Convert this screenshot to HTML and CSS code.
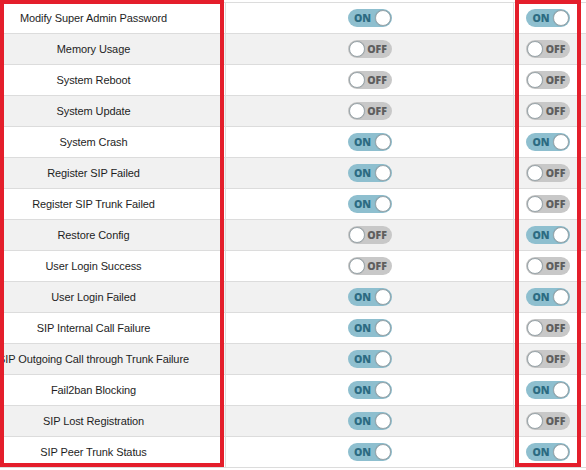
FILE: index.html
```
<!DOCTYPE html>
<html>
<head>
<meta charset="utf-8">
<link rel="stylesheet" href="styles.css">
</head>
<body>
<div class="page">
  <div class="table">
    <div class="row"><div class="name">Modify Super Admin Password</div><div class="c2"><span class="tg on"><b>ON</b><i></i></span></div><div class="c3"><span class="tg on"><b>ON</b><i></i></span></div></div>
    <div class="row alt"><div class="name">Memory Usage</div><div class="c2"><span class="tg off"><i></i><b>OFF</b></span></div><div class="c3"><span class="tg off"><i></i><b>OFF</b></span></div></div>
    <div class="row"><div class="name">System Reboot</div><div class="c2"><span class="tg off"><i></i><b>OFF</b></span></div><div class="c3"><span class="tg off"><i></i><b>OFF</b></span></div></div>
    <div class="row alt"><div class="name">System Update</div><div class="c2"><span class="tg off"><i></i><b>OFF</b></span></div><div class="c3"><span class="tg off"><i></i><b>OFF</b></span></div></div>
    <div class="row"><div class="name">System Crash</div><div class="c2"><span class="tg on"><b>ON</b><i></i></span></div><div class="c3"><span class="tg on"><b>ON</b><i></i></span></div></div>
    <div class="row alt"><div class="name">Register SIP Failed</div><div class="c2"><span class="tg on"><b>ON</b><i></i></span></div><div class="c3"><span class="tg off"><i></i><b>OFF</b></span></div></div>
    <div class="row"><div class="name">Register SIP Trunk Failed</div><div class="c2"><span class="tg on"><b>ON</b><i></i></span></div><div class="c3"><span class="tg off"><i></i><b>OFF</b></span></div></div>
    <div class="row alt"><div class="name">Restore Config</div><div class="c2"><span class="tg off"><i></i><b>OFF</b></span></div><div class="c3"><span class="tg on"><b>ON</b><i></i></span></div></div>
    <div class="row"><div class="name">User Login Success</div><div class="c2"><span class="tg off"><i></i><b>OFF</b></span></div><div class="c3"><span class="tg off"><i></i><b>OFF</b></span></div></div>
    <div class="row alt"><div class="name">User Login Failed</div><div class="c2"><span class="tg on"><b>ON</b><i></i></span></div><div class="c3"><span class="tg on"><b>ON</b><i></i></span></div></div>
    <div class="row"><div class="name">SIP Internal Call Failure</div><div class="c2"><span class="tg on"><b>ON</b><i></i></span></div><div class="c3"><span class="tg off"><i></i><b>OFF</b></span></div></div>
    <div class="row alt"><div class="name">SIP Outgoing Call through Trunk Failure</div><div class="c2"><span class="tg on"><b>ON</b><i></i></span></div><div class="c3"><span class="tg off"><i></i><b>OFF</b></span></div></div>
    <div class="row"><div class="name">Fail2ban Blocking</div><div class="c2"><span class="tg on"><b>ON</b><i></i></span></div><div class="c3"><span class="tg on"><b>ON</b><i></i></span></div></div>
    <div class="row alt"><div class="name">SIP Lost Registration</div><div class="c2"><span class="tg on"><b>ON</b><i></i></span></div><div class="c3"><span class="tg off"><i></i><b>OFF</b></span></div></div>
    <div class="row"><div class="name">SIP Peer Trunk Status</div><div class="c2"><span class="tg on"><b>ON</b><i></i></span></div><div class="c3"><span class="tg on"><b>ON</b><i></i></span></div></div>
  </div>
  <div class="frame frame-left"></div>
  <div class="frame frame-right"></div>
</div>
</body>
</html>
```
FILE: styles.css
```
html, body {
  margin: 0;
  padding: 0;
  background: #fff;
  overflow: hidden;
}
.page {
  position: relative;
  width: 586px;
  height: 470px;
  overflow: hidden;
  font-family: "Liberation Sans", Arial, sans-serif;
  font-size: 11px;
  letter-spacing: -0.1px;
  color: #1e1e1e;
}
.table {
  margin-top: 2px;
  margin-left: -38px;
  width: 640px;
  border-top: 1px solid #dcdcdc;
}
.row {
  display: grid;
  grid-template-columns: 264px 288px 86px;
  height: 31px;
  box-sizing: border-box;
  border-bottom: 1px solid #dcdcdc;
  background: #fff;
}
.row.alt {
  background: #f1f1f1;
}
.name {
  display: flex;
  align-items: center;
  justify-content: center;
  white-space: nowrap;
  min-width: 0;
  border-right: 1px solid #dcdcdc;
}
.c2, .c3 {
  display: flex;
  align-items: center;
  justify-content: center;
}
.c2 {
  border-right: 1px solid #dcdcdc;
}
.c3 {
  justify-content: flex-start;
  padding-left: 12px;
}
.tg {
  display: flex;
  align-items: center;
  box-sizing: border-box;
  width: 44px;
  height: 18px;
  border-radius: 9px;
  padding: 0 1px;
  letter-spacing: 0;
  font-family: "Open Sans", "Liberation Sans", sans-serif;
  font-size: 10.5px;
  font-weight: 700;
}
.tg b {
  flex: 1;
  text-align: center;
  line-height: 18px;
}
.tg i {
  width: 16px;
  height: 16px;
  border-radius: 50%;
  background: #fff;
  box-sizing: border-box;
  border: 1px solid #9aa6ab;
  box-shadow: 0 0 1px rgba(0,0,0,0.2);
}
.tg.on {
  background: #8ebfcf;
  color: #2c6b82;
}
.tg.on b {
  padding-left: 2px;
}
.tg.off {
  background: #c8c8c8;
  color: #5e5e5e;
}
.tg.off b {
  padding-right: 1px;
}
.frame {
  position: absolute;
  top: 0;
  height: 467px;
  box-sizing: border-box;
  border: 4px solid #e41e2b;
}
.frame-left {
  left: 0;
  width: 224px;
}
.frame-right {
  left: 515px;
  width: 66px;
}
```
